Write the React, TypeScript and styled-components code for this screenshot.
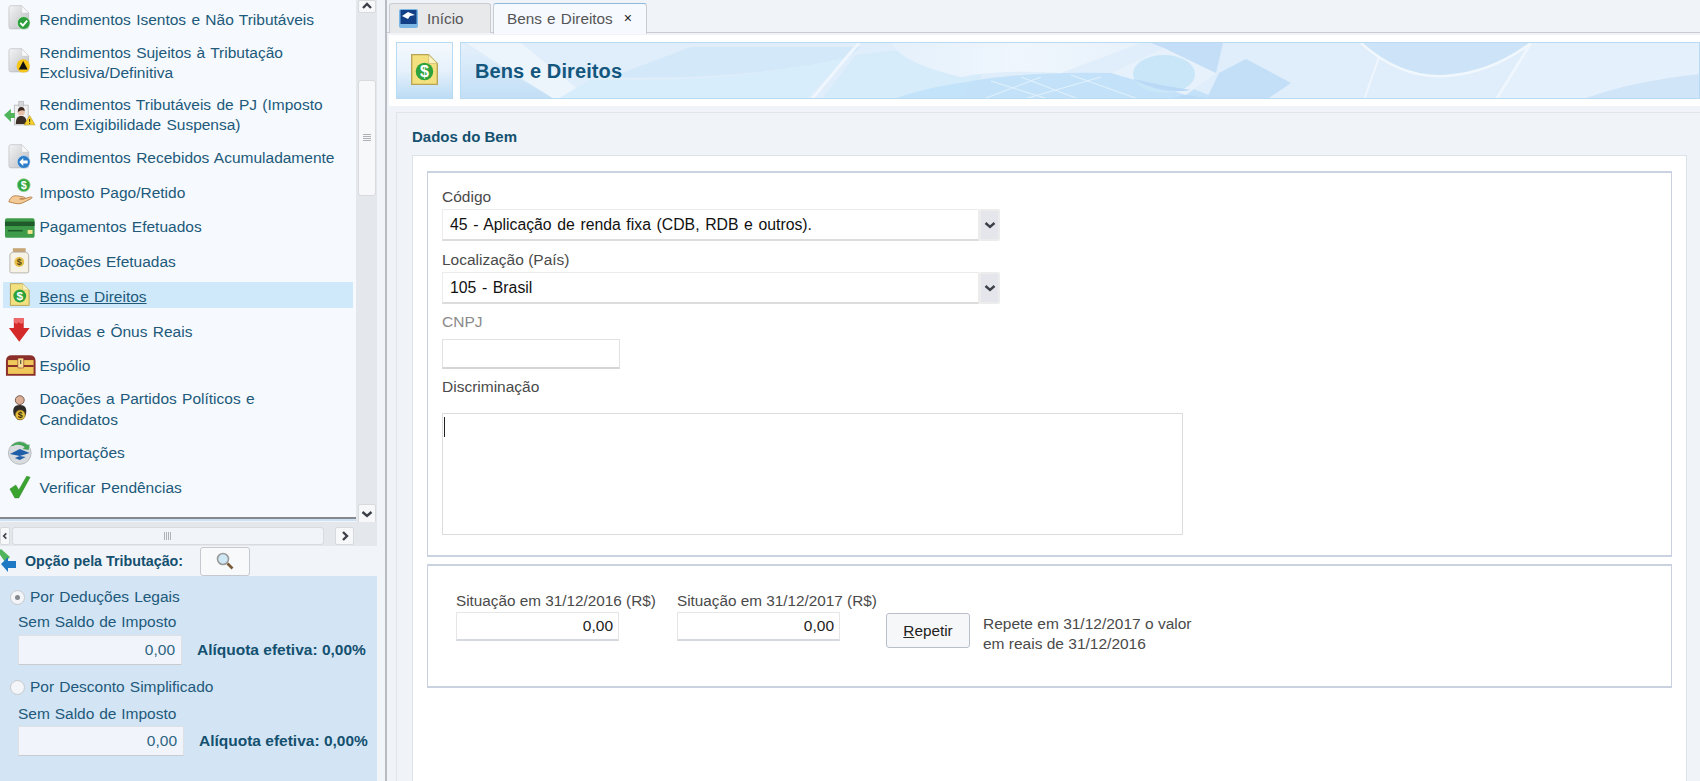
import React from 'react';
import styled, { createGlobalStyle } from 'styled-components';

const GlobalStyle = createGlobalStyle`
    html, body {
        margin: 0;
        padding: 0;
        height: 100%;
        background: #f0f3f8;
        font-family: "Liberation Sans", Arial, sans-serif;
    }
`;

const Page = styled.div`
    width: 1700px;
    height: 781px;
    display: flex;
    overflow: hidden;
`;

/* ---- left column ---- */
const Sidebar = styled.aside`
    width: 385px;
    flex: none;
    display: flex;
    flex-direction: column;
    border-right: 2px solid #b9bcc2;
    background: #f1f4f9;
`;
const TreeArea = styled.div`
    height: 522px;
    flex: none;
    width: 377px;
    display: flex;
`;
const TreeList = styled.div`
    width: 356px;
    flex: none;
    height: 519px;
    background: #f6f9fe;
    border-bottom: 2px solid #85888c;
    box-shadow: 0 2px 0 #cfe2f4;
    box-sizing: border-box;
    overflow: hidden;
    padding-top: 3px;
`;
const TreeRow = styled.div<{ $h: number; $active?: boolean }>`
    height: ${(props) => props.$h}px;
    display: flex;
    align-items: center;
    margin: 0 3px 0 3px;
    background: ${(props) => (props.$active ? 'linear-gradient(#cfe9fb, #cfe9fb) 0 2px / 100% 26px no-repeat' : 'transparent')};
    color: #21597a;
    font-size: 15.5px;
    line-height: 20.5px;
    word-spacing: 1px;
    text-decoration: ${(props) => (props.$active ? 'underline' : 'none')};
    svg {
        flex: none;
        width: 36.5px;
        height: 30px;
        overflow: visible;
    }
`;
const VScroll = styled.div`
    width: 21px;
    flex: none;
    background: #e4e7ec;
    display: flex;
    flex-direction: column;
    align-items: center;
    height: 524px;
`;
const ScrollBtn = styled.div<{ $h?: number }>`
    width: 18px;
    height: ${(props) => props.$h || 20}px;
    flex: none;
    background: #f7f8fa;
    border: 1px solid #d8dade;
    border-radius: 2px;
    box-sizing: border-box;
    display: flex;
    align-items: center;
    justify-content: center;
`;
const VThumb = styled.div`
    width: 18px;
    height: 116px;
    flex: none;
    margin-top: 67px;
    margin-bottom: auto;
    background: #f7f8fa;
    border: 1px solid #d8dade;
    border-radius: 3px;
    box-sizing: border-box;
    display: flex;
    align-items: center;
    justify-content: center;
`;
const HScroll = styled.div`
    height: 24px;
    width: 377px;
    flex: none;
    background: #e4e7ec;
    display: flex;
    align-items: center;
    padding-top: 3px;
    box-sizing: border-box;
`;
const HThumb = styled.div`
    width: 312px;
    height: 18px;
    margin: 0 11px 0 2px;
    background: #f1f4f8;
    border: 1px solid #d8dade;
    border-radius: 3px;
    box-sizing: border-box;
    display: flex;
    align-items: center;
    justify-content: center;
`;
const SmallBtn = styled(ScrollBtn)<{ $w: number }>`
    width: ${(props) => props.$w}px;
    height: 18px;
    justify-content: ${(props) => (props.$w < 15 ? 'flex-start' : 'center')};
`;
const OptionHead = styled.div`
    height: 30px;
    width: 377px;
    flex: none;
    display: flex;
    align-items: center;
    color: #14506f;
    font-size: 14.3px;
    font-weight: bold;
    svg {
        flex: none;
    }
`;
const SearchBtn = styled.div`
    width: 50px;
    height: 29px;
    margin-left: 17px;
    background: #f8f9fb;
    border: 1px solid #c5c9cf;
    border-radius: 3px;
    box-sizing: border-box;
    display: flex;
    align-items: center;
    justify-content: center;
`;
const OptionPanel = styled.div`
    flex: 1;
    width: 377px;
    background: #d3e5f5;
    padding: 9px 0 0 10px;
    box-sizing: border-box;
    color: #21597a;
    font-size: 15.5px;
`;
const RadioRow = styled.div<{ $top?: number }>`
    display: flex;
    align-items: center;
    gap: 5px;
    height: 24px;
    margin-top: ${(props) => props.$top || 0}px;
    word-spacing: 0.8px;
`;
const Radio = styled.span<{ $checked?: boolean }>`
    width: 15px;
    height: 15px;
    flex: none;
    border-radius: 50%;
    background: #f3f5f8;
    border: 1px solid #c6c9cd;
    box-sizing: border-box;
    display: flex;
    align-items: center;
    justify-content: center;
    &::after {
        content: '';
        display: ${(props) => (props.$checked ? 'block' : 'none')};
        width: 5px;
        height: 5px;
        border-radius: 50%;
        background: #85888c;
    }
`;
const TaxLabel = styled.div<{ $second?: boolean }>`
    margin: ${(props) => (props.$second ? '5px 0 2px 8px' : '3px 0 3px 8px')};
    height: 20px;
    line-height: 20px;
    word-spacing: 0.5px;
`;
const TaxRow = styled.div`
    display: flex;
    align-items: center;
    margin-left: 8px;
    gap: 15px;
`;
const TaxInput = styled.div<{ $w: number }>`
    width: ${(props) => props.$w}px;
    height: 30px;
    background: #f1f5fb;
    border: 1px solid #dde1e6;
    border-bottom-color: #c8cbd0;
    box-sizing: border-box;
    color: #2e6583;
    text-align: right;
    padding-right: 6px;
    line-height: 28px;
    font-size: 15.5px;
`;
const TaxRate = styled.div`
    font-weight: bold;
    color: #14506f;
    font-size: 15.5px;
`;

/* ---- right column ---- */
const Main = styled.main`
    flex: 1;
    min-width: 0;
    display: flex;
    flex-direction: column;
    background: #f0f3f8;
`;
const TabBar = styled.div`
    height: 33px;
    flex: none;
    padding: 3px 0 0 2px;
    box-sizing: border-box;
    display: flex;
    gap: 2px;
    border-bottom: 1px solid #c9ccd2;
`;
const Tab = styled.div<{ $active?: boolean }>`
    height: ${(props) => (props.$active ? 31 : 30)}px;
    box-sizing: border-box;
    display: flex;
    align-items: ${(props) => (props.$active ? 'flex-start' : 'center')};
    padding: ${(props) => (props.$active ? '5px 0 0 13px' : '0 0 0 9px')};
    width: ${(props) => (props.$active ? 154 : 102)}px;
    gap: 9px;
    border: 1px solid #c9ccd2;
    border-top: 1px solid ${(props) => (props.$active ? '#8db9dc' : '#c9ccd2')};
    border-bottom: none;
    border-radius: 3px 3px 0 0;
    background: ${(props) => (props.$active ? '#f6f9fe' : '#e8e9eb')};
    color: #555;
    font-size: 15.3px;
    word-spacing: 1px;
    line-height: 20px;
`;
const TabClose = styled.span`
    font-size: 14px;
    color: #222;
    margin-left: 2px;
    line-height: 18px;
`;
const HeaderBand = styled.div`
    height: 71px;
    flex: none;
    margin: 2px 0 0 2px;
    background: #fff;
    display: flex;
    gap: 7px;
    padding: 7px 0 7px 7px;
    box-sizing: border-box;
`;
const IconBox = styled.div`
    width: 57px;
    flex: none;
    border: 1px solid #b9daf3;
    box-sizing: border-box;
    background: linear-gradient(#f4f9fe, #e6f1fb 50%, #bcdcf5);
    display: flex;
    align-items: center;
    justify-content: center;
    padding-bottom: 3px;
`;
const Banner = styled.div`
    flex: 1;
    position: relative;
    overflow: hidden;
    border: 1px solid #b9daf3;
    box-sizing: border-box;
    background: #e0edfa;
    display: flex;
    align-items: center;
    padding: 2px 0 0 14px;
    color: #14577e;
    font-size: 20px;
    font-weight: bold;
    letter-spacing: 0.1px;
    span {
        position: relative;
    }
    svg {
        position: absolute;
        left: 0;
        top: 0;
    }
`;
const Content = styled.section`
    flex: 1;
    margin: 6px 0 0 9px;
    min-height: 0;
    border-top: 1px solid #e1e4e9;
    border-left: 1px solid #e1e4e9;
    padding: 0 13px 0 15px;
    display: flex;
    flex-direction: column;
`;
const SectionTitle = styled.h2`
    margin: 0;
    height: 42px;
    line-height: 47px;
    flex: none;
    font-size: 15px;
    font-weight: bold;
    color: #14506f;
`;
const WhiteBox = styled.div`
    flex: 1;
    background: #fff;
    border: 1px solid #dbe2ea;
    border-bottom: none;
    padding: 15px 14px 0;
    display: flex;
    flex-direction: column;
    gap: 7px;
`;
const FieldBox = styled.div<{ $h: number }>`
    height: ${(props) => props.$h}px;
    flex: none;
    border: 2px solid #c9d2de;
    border-width: 2px 1px 2px 1px;
    box-sizing: border-box;
`;
const FormColumn = styled.div`
    padding: 14px 0 0 14px;
    display: flex;
    flex-direction: column;
    align-items: flex-start;
`;
const Label = styled.label<{ $off?: boolean }>`
    display: block;
    height: 20px;
    line-height: 20px;
    font-size: 15.5px;
    color: ${(props) => (props.$off ? '#8a8a8a' : '#4a4a4a')};
`;
const SelectRow = styled.div`
    display: flex;
    height: 32px;
    margin: 2px 0 8.5px;
`;
const SelectValue = styled.div`
    width: 537px;
    height: 32px;
    border: 1px solid #ececec;
    border-bottom: 2px solid #dcdcdc;
    box-sizing: border-box;
    font-size: 15.8px;
    word-spacing: 1.2px;
    line-height: 30px;
    padding-left: 7px;
    color: #111;
`;
const SelectBtn = styled.div`
    width: 21px;
    height: 32px;
    background: #e4e6ec;
    border: 2px solid #ececec;
    border-radius: 2px;
    box-sizing: border-box;
    display: flex;
    align-items: center;
    justify-content: center;
`;
const TextInput = styled.div`
    width: 178px;
    height: 30px;
    margin: 7px 0 8px;
    border: 1px solid #e2e2e2;
    border-bottom: 2px solid #d5d5d5;
    box-sizing: border-box;
`;
const TextArea = styled.div`
    width: 741px;
    height: 122px;
    margin-top: 16px;
    border: 1px solid #dcdcdc;
    box-sizing: border-box;
    padding: 3px 1px;
    &::before {
        content: '';
        display: block;
        width: 1px;
        height: 20px;
        background: #222;
    }
`;
const ValueRow = styled.div`
    display: flex;
    padding: 25px 0 0 28px;
    align-items: flex-start;
`;
const ValueField = styled.div<{ $w: number }>`
    width: ${(props) => props.$w}px;
    flex: none;
`;
const ValueLabel = styled.div`
    height: 20px;
    line-height: 20px;
    font-size: 15.3px;
    color: #4a4a4a;
    white-space: nowrap;
`;
const ValueInput = styled.div`
    width: 163px;
    height: 29px;
    margin-top: 1px;
    border: 1px solid #e6e6e6;
    border-bottom: 2px solid #d5d8dd;
    box-sizing: border-box;
    text-align: right;
    padding-right: 5px;
    line-height: 26px;
    font-size: 15.5px;
    color: #222;
`;
const RepeatBtn = styled.button`
    width: 84px;
    height: 35px;
    flex: none;
    margin: 22px 13px 0 0;
    background: #f6f7f9;
    border: 1px solid #b9bfc9;
    border-radius: 3px;
    font-family: inherit;
    font-size: 15.3px;
    color: #222;
    padding: 0;
    u {
        text-decoration: underline;
    }
`;
const RepeatNote = styled.div`
    margin-top: 23px;
    font-size: 15.5px;
    line-height: 20px;
    color: #4a4a4a;
    white-space: nowrap;
`;

/* ---- icons ---- */
const Chevron = ({ dir }: { dir: 'up' | 'down' | 'left' | 'right' }) => {
    const d = { up: 'M2 7 L6 3 L10 7', down: 'M1.5 4 L6 8 L10.5 4', left: 'M8 2 L4 6 L8 10', right: 'M4 2 L8 6 L4 10' }[dir];
    return (
        <svg width="12" height="12" viewBox="0 0 12 12">
            <path d={d} fill="none" stroke="#3c4048" strokeWidth="2.4" />
        </svg>
    );
};
const GripV = () => (
    <svg width="10" height="8" viewBox="0 0 10 8">
        <path d="M1 .5H9M1 2.5H9M1 4.5H9M1 6.5H9" stroke="#aeb2b8" />
    </svg>
);
const GripH = () => (
    <svg width="8" height="10" viewBox="0 0 8 10">
        <path d="M.5 1V9M2.5 1V9M4.5 1V9M6.5 1V9" stroke="#aeb2b8" />
    </svg>
);
const PaperIcon = () => (
    <>
        <defs>
            <linearGradient id="paperFill" x1="0" y1="0" x2="1" y2="1">
                <stop offset="0" stopColor="#f5f5f6" />
                <stop offset="1" stopColor="#b9bbbf" />
            </linearGradient>
        </defs>
        <path d="M8 .5H19L26 8V22q0 2-2 2H8q-2 0-2-2V2.5q0-2 2-2Z" fill="url(#paperFill)" stroke="#bcbec2" strokeWidth=".7" />
        <path d="M19 .5V8H26Z" fill="#fafafa" stroke="#c5c7ca" strokeWidth=".5" />
    </>
);
const IconIsentos = () => (
    <svg viewBox="0 0 37 30">
        <PaperIcon />
        <circle cx="21" cy="18" r="6.5" fill="#2e9e3c" stroke="#e8f4e8" strokeWidth=".7" />
        <path d="M17.5 18l2.6 2.6 4.4-5" fill="none" stroke="#fff" strokeWidth="1.9" />
    </svg>
);
const IconSujeitos = () => (
    <svg viewBox="0 0 37 30">
        <PaperIcon />
        <circle cx="20.5" cy="18" r="6.7" fill="#f5c518" />
        <path d="M20.5 13L25 21.5H16Z" fill="#111" />
    </svg>
);
const IconPJ = () => (
    <svg viewBox="0 0 37 30">
        <rect x="11.5" y="5" width="14" height="20" fill="#eef0f2" stroke="#b5b5b5" strokeWidth=".8" />
        <rect x="16" y="1" width="5" height="5" fill="#d3d5d8" stroke="#aaa" strokeWidth=".5" />
        <path d="M1 15l7-6v4h4v5H8v4z" fill="#4fb45a" />
        <circle cx="18.5" cy="12" r="3.6" fill="#e8bfa8" />
        <path d="M15 12q0-5 3.5-5T22 11q-3-2-7 1z" fill="#3a2a22" />
        <path d="M13 24c0-6 2-8 5.5-8s5.5 2 5.5 8z" fill="#3a3028" />
        <path d="M27 15.5l5.5 9.5h-11z" fill="#f7cf2b" stroke="#b08c10" strokeWidth=".5" />
        <path d="M27 19v3M27 23v1" stroke="#222" />
    </svg>
);
const IconRecebidos = () => (
    <svg viewBox="0 0 37 30">
        <PaperIcon />
        <circle cx="21" cy="18" r="6.5" fill="#2b7cc9" stroke="#e6f0fa" strokeWidth=".5" />
        <path d="M16.5 18l4-4v2.5h4.5v3h-4.500V22z" fill="#fff" />
    </svg>
);
const IconPago = () => (
    <svg viewBox="0 0 37 30">
        <circle cx="21" cy="7" r="6.5" fill="#32a63f" stroke="#8fd092" strokeWidth=".8" />
        <text x="21" y="11" fontSize="11" fontWeight="bold" fill="#fff" textAnchor="middle" fontFamily="Liberation Sans">
            $
        </text>
        <path d="M6 24c1-5 5-7 9-6l6 1c2 0 1 2-1 2h-3 4l7-2c2 0 2 1 0 2l-8 4c-5 2-9 0-14-1z" fill="#f4c998" stroke="#b37d42" strokeWidth=".9" />
    </svg>
);
const IconCard = () => (
    <svg viewBox="0 0 37 30">
        <rect x="2" y="5" width="30" height="20" rx="2" fill="#3e9b4a" />
        <rect x="2" y="8.5" width="30" height="4.5" fill="#1f5a2b" />
        <rect x="5" y="17" width="15" height="1.5" fill="#1f5a2b" />
        <rect x="25" y="17" width="5" height="4" fill="#f3e48e" />
    </svg>
);
const IconJar = () => (
    <svg viewBox="0 0 37 30">
        <rect x="10" y="0" width="13" height="4" fill="#c9a678" />
        <path d="M10 4h13q3 1 3 3v17q0 1-2 1H9q-2 0-2-1V7q0-2 3-3z" fill="#f6f2e6" stroke="#a9a69c" strokeWidth=".8" />
        <circle cx="16.5" cy="14" r="5" fill="#e3c04a" />
        <text x="16.5" y="17.5" fontSize="9" fontWeight="bold" fill="#5a4510" textAnchor="middle" fontFamily="Liberation Sans">
            $
        </text>
    </svg>
);
const YellowDocShape = () => (
    <>
        <path d="M.5 .5H13L19.5 7V22.5H.5Z" fill="#f3e07e" stroke="#b7a455" />
        <path d="M13 .5V7H19.5Z" fill="#fbf3c0" stroke="#c9b868" strokeWidth=".5" />
        <circle cx="10" cy="13" r="6.5" fill="#2ea23c" />
        <text x="10" y="17.2" fontSize="12" fontWeight="bold" fill="#fff" textAnchor="middle" fontFamily="Liberation Sans">
            $
        </text>
    </>
);
const YellowDoc = () => (
    <svg width="27" height="31" viewBox="0 0 20 23">
        <YellowDocShape />
    </svg>
);
const IconBens = () => (
    <svg viewBox="0 0 37 30">
        <g transform="translate(7 0)">
            <YellowDocShape />
        </g>
    </svg>
);
const IconDividas = () => (
    <svg viewBox="0 0 37 30">
        <path d="M11 1h10v10h6L16.5 25 6 11h5z" fill="#d42a2a" />
        <path d="M11 1h10v4l-2.5 2-2.5-2-2.5 2L11 5z" fill="#ef6a6a" />
    </svg>
);
const IconChest = () => (
    <svg viewBox="0 0 37 30">
        <path d="M3 10q0-6 6-6h18q6 0 6 6v15H3z" fill="#8a2f2a" />
        <rect x="5" y="9" width="26" height="14" fill="#f0c75a" />
        <rect x="5" y="14" width="26" height="2" fill="#8a2f2a" />
        <rect x="15" y="7" width="6" height="10" rx="1" fill="#f8e090" stroke="#8a2f2a" strokeWidth=".6" />
        <rect x="17.5" y="9" width="1" height="4" fill="#333" />
    </svg>
);
const IconDoacoes = () => (
    <svg viewBox="0 0 37 30">
        <circle cx="17" cy="5" r="4.5" fill="#dcb097" stroke="#7a5c4a" />
        <path d="M11 20c-2-7 1-10 6-10s8 3 6 10l-4 5h-4z" fill="#2e2a28" />
        <circle cx="17.5" cy="20" r="5" fill="#e6bf3c" stroke="#7a5c18" strokeWidth=".6" />
        <text x="17.5" y="23.5" fontSize="9" fontWeight="bold" fill="#3d2e06" textAnchor="middle" fontFamily="Liberation Sans">
            $
        </text>
    </svg>
);
const IconImport = () => (
    <svg viewBox="0 0 37 30">
        <circle cx="17" cy="14" r="11.5" fill="#d9dcde" stroke="#b8bcbf" />
        <path d="M8 7q8-8 17-1l2-1-1 6-6-1 2-2q-6-4-12-1z" fill="#43a653" />
        <path d="M7 15l10-5 10 4-10 3zM12 19l5-2 6 1-6 3z" fill="#1f5fa8" />
    </svg>
);
const IconCheck = () => (
    <svg viewBox="0 0 37 30">
        <path d="M7 15l6-4 3 5L24 2l3.500 1L16 24h-4z" fill="#3ba42f" stroke="#2b8524" strokeWidth=".5" />
    </svg>
);
const ArrowsIcon = () => (
    <svg width="25" height="24" viewBox="0 0 25 24">
        <path d="M-2 3l3-3 9 8-5 5z" fill="#4fb45a" />
        <path d="M1 15l7-7v4h8v7H8v4z" fill="#1f78c4" />
    </svg>
);
const MagnifierIcon = () => (
    <svg width="20" height="20" viewBox="0 0 20 20">
        <circle cx="8" cy="8" r="5.5" fill="#cfe8f6" stroke="#9a9a9a" strokeWidth="1.6" />
        <path d="M12.5 12.5l5 5" stroke="#7b5a38" strokeWidth="2.6" />
    </svg>
);
const HomeIcon = () => (
    <svg width="19" height="19" viewBox="0 0 19 19">
        <rect width="19" height="19" rx="2" fill="#7cb6e4" />
        <rect x="1.5" y="1" width="16" height="14" fill="#123f86" />
        <path d="M3 7l6-4 7 3-5 1-2 3z" fill="#fff" />
    </svg>
);
// background swirl of the page header, soft shapes only
const BannerArt = () => (
    <svg width="1240" height="57" viewBox="0 0 1240 57">
        <defs>
            <linearGradient id="bannerLeft" x1="0" y1="0" x2="0" y2="1">
                <stop offset="0" stopColor="#e6f1fb" />
                <stop offset="1" stopColor="#c1def6" />
            </linearGradient>
            <linearGradient id="bannerTop" x1="0" y1="0" x2="1" y2="0">
                <stop offset="0" stopColor="#e4f0fb" />
                <stop offset="0.5" stopColor="#eff6fd" />
                <stop offset="1" stopColor="#e8f2fb" />
            </linearGradient>
        </defs>
        <path d="M0 0L95 57H0Z" fill="url(#bannerLeft)" />
        <path d="M5 0L95 57H130L60 0Z" fill="#edf5fc" />
        <path d="M230 4H400L385 15Q280 38 150 34Z" fill="#d3e8f9" />
        <path d="M130 36Q260 42 385 15L345 57H95Z" fill="#d8edfb" />
        <path d="M350 57L385 15L398 0" fill="none" stroke="#eff6fd" strokeWidth="3" />
        <path d="M360 57L395 12Q450 4 520 4V40Q470 44 430 57Z" fill="#d6ecfb" />
        <path d="M430 57Q470 42 530 36V57Z" fill="#c2e3f9" />
        <path d="M430 0H680L600 30Q540 26 500 34Q440 20 430 0Z" fill="url(#bannerTop)" />
        <path d="M510 38Q570 28 650 30T730 45L760 57H500Z" fill="#c3e2f9" />
        <path d="M520 57L580 34M560 57L640 34M620 57L560 34M680 57L610 32M590 57L530 38" stroke="#e2f1fc" strokeWidth="1" />
        <path d="M650 30L703 5L755 30L725 52Z" fill="#e6f1fb" />
        <path d="M703 5L690 0H762L755 30Z" fill="#c3def6" />
        <ellipse cx="703" cy="31" rx="31" ry="19" fill="#c9e6f8" />
        <path d="M672 36Q700 52 730 47L700 42Z" fill="#b9d9f6" />
        <path d="M725 52L760 57H700Z" fill="#bcdaf6" />
        <path d="M785 16L830 40L805 57H745L758 30Z" fill="#c3dff7" />
        <path d="M923 0L903 57" stroke="#eff6fd" strokeWidth="2" />
        <path d="M900 0Q940 36 985 33T1070 0Z" fill="#cde4f8" />
        <path d="M900 0Q940 36 985 33T1070 0" fill="none" stroke="#f0f7fd" strokeWidth="2.5" />
        <path d="M1070 0L1035 57" stroke="#eff6fd" strokeWidth="3" />
        <path d="M1072 0H1240V31Q1170 38 1120 57H1037Z" fill="#e4f0fb" />
        <path d="M1120 57Q1170 38 1240 31V57Z" fill="#d0e5f8" />
    </svg>
);

const items: { label: React.ReactNode; h: number; icon: React.ReactNode; active?: boolean }[] = [
    { label: 'Rendimentos Isentos e Não Tributáveis', h: 34, icon: <IconIsentos /> },
    { label: <>Rendimentos Sujeitos à Tributação<br />Exclusiva/Definitiva</>, h: 52, icon: <IconSujeitos /> },
    { label: <>Rendimentos Tributáveis de PJ (Imposto<br />com Exigibilidade Suspensa)</>, h: 52, icon: <IconPJ /> },
    { label: 'Rendimentos Recebidos Acumuladamente', h: 35, icon: <IconRecebidos /> },
    { label: 'Imposto Pago/Retido', h: 34, icon: <IconPago /> },
    { label: 'Pagamentos Efetuados', h: 35, icon: <IconCard /> },
    { label: 'Doações Efetuadas', h: 35, icon: <IconJar /> },
    { label: 'Bens e Direitos', h: 35, icon: <IconBens />, active: true },
    { label: 'Dívidas e Ônus Reais', h: 34, icon: <IconDividas /> },
    { label: 'Espólio', h: 34, icon: <IconChest /> },
    { label: <>Doações a Partidos Políticos e<br />Candidatos</>, h: 53, icon: <IconDoacoes /> },
    { label: 'Importações', h: 35, icon: <IconImport /> },
    { label: 'Verificar Pendências', h: 35, icon: <IconCheck /> },
];

const App = () => {
    return (
        <Page>
            <GlobalStyle />
            <Sidebar>
                <TreeArea>
                    <TreeList>
                        {items.map((item, i) => (
                            <TreeRow key={i} $h={item.h} $active={item.active}>
                                {item.icon}
                                <span>{item.label}</span>
                            </TreeRow>
                        ))}
                    </TreeList>
                    <VScroll>
                        <ScrollBtn $h={13}>
                            <Chevron dir="up" />
                        </ScrollBtn>
                        <VThumb>
                            <GripV />
                        </VThumb>
                        <ScrollBtn>
                            <Chevron dir="down" />
                        </ScrollBtn>
                    </VScroll>
                </TreeArea>
                <HScroll>
                    <SmallBtn $w={10}>
                        <Chevron dir="left" />
                    </SmallBtn>
                    <HThumb>
                        <GripH />
                    </HThumb>
                    <SmallBtn $w={19}>
                        <Chevron dir="right" />
                    </SmallBtn>
                </HScroll>
                <OptionHead>
                    <ArrowsIcon />
                    Opção pela Tributação:
                    <SearchBtn>
                        <MagnifierIcon />
                    </SearchBtn>
                </OptionHead>
                <OptionPanel>
                    <RadioRow>
                        <Radio $checked />
                        Por Deduções Legais
                    </RadioRow>
                    <TaxLabel>Sem Saldo de Imposto</TaxLabel>
                    <TaxRow>
                        <TaxInput $w={164}>0,00</TaxInput>
                        <TaxRate>Alíquota efetiva: 0,00%</TaxRate>
                    </TaxRow>
                    <RadioRow $top={10}>
                        <Radio />
                        Por Desconto Simplificado
                    </RadioRow>
                    <TaxLabel $second>Sem Saldo de Imposto</TaxLabel>
                    <TaxRow>
                        <TaxInput $w={166}>0,00</TaxInput>
                        <TaxRate>Alíquota efetiva: 0,00%</TaxRate>
                    </TaxRow>
                </OptionPanel>
            </Sidebar>
            <Main>
                <TabBar>
                    <Tab>
                        <HomeIcon />
                        Início
                    </Tab>
                    <Tab $active>
                        Bens e Direitos
                        <TabClose>×</TabClose>
                    </Tab>
                </TabBar>
                <HeaderBand>
                    <IconBox>
                        <YellowDoc />
                    </IconBox>
                    <Banner>
                        <BannerArt />
                        <span>Bens e Direitos</span>
                    </Banner>
                </HeaderBand>
                <Content>
                    <SectionTitle>Dados do Bem</SectionTitle>
                    <WhiteBox>
                        <FieldBox $h={386}>
                            <FormColumn>
                                <Label>Código</Label>
                                <SelectRow>
                                    <SelectValue>45 - Aplicação de renda fixa (CDB, RDB e outros).</SelectValue>
                                    <SelectBtn>
                                        <Chevron dir="down" />
                                    </SelectBtn>
                                </SelectRow>
                                <Label>Localização (País)</Label>
                                <SelectRow>
                                    <SelectValue>105 - Brasil</SelectValue>
                                    <SelectBtn>
                                        <Chevron dir="down" />
                                    </SelectBtn>
                                </SelectRow>
                                <Label $off>CNPJ</Label>
                                <TextInput />
                                <Label>Discriminação</Label>
                                <TextArea />
                            </FormColumn>
                        </FieldBox>
                        <FieldBox $h={124}>
                            <ValueRow>
                                <ValueField $w={221}>
                                    <ValueLabel>Situação em 31/12/2016 (R$)</ValueLabel>
                                    <ValueInput>0,00</ValueInput>
                                </ValueField>
                                <ValueField $w={209}>
                                    <ValueLabel>Situação em 31/12/2017 (R$)</ValueLabel>
                                    <ValueInput>0,00</ValueInput>
                                </ValueField>
                                <RepeatBtn>
                                    <u>R</u>epetir
                                </RepeatBtn>
                                <RepeatNote>
                                    Repete em 31/12/2017 o valor
                                    <br />
                                    em reais de 31/12/2016
                                </RepeatNote>
                            </ValueRow>
                        </FieldBox>
                    </WhiteBox>
                </Content>
            </Main>
        </Page>
    );
};

export default App;
